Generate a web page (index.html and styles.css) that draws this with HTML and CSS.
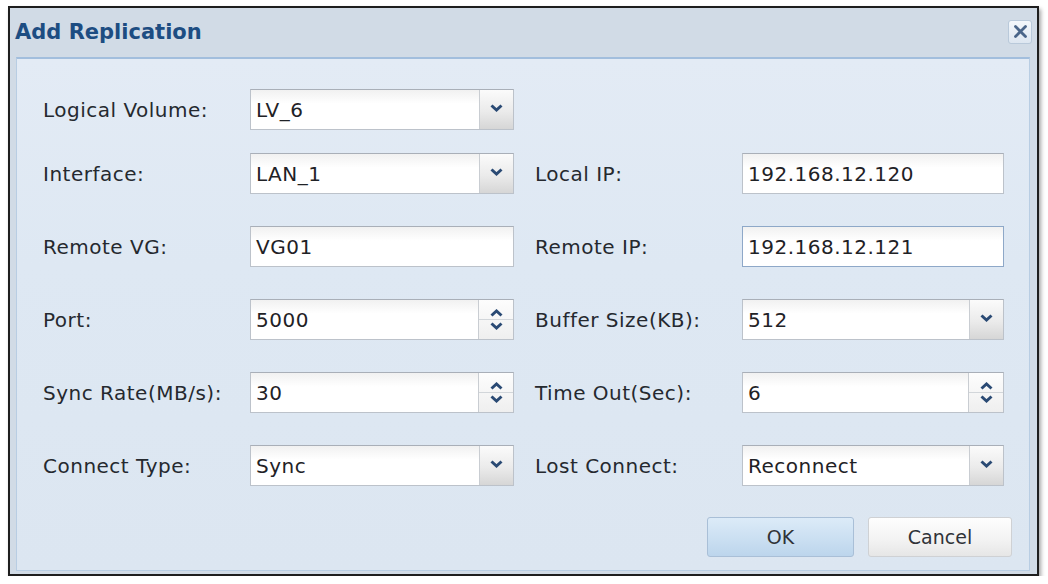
FILE: index.html
```html
<!DOCTYPE html>
<html lang="en">
	<head>
		<meta charset="UTF-8">
		<title>Add Replication</title>
		<link rel="stylesheet" href="styles.css">
	</head>
    <body>
        <div class="dialog">
            <div class="titlebar">
                <span class="title">Add Replication</span>
                <button type="button" class="close">
                    <svg width="15" height="15" viewBox="0 0 15 15"><path d="M2.5 2.5L12.5 12.5M12.5 2.5L2.5 12.5" stroke="#4a6589" stroke-width="2.8" stroke-linecap="round"/></svg>
                </button>
            </div>
            <div class="panel">
                <div class="grid">
                    <label class="lbl">Logical Volume:</label>
                    <div class="box"><span class="val">LV_6</span><span class="drop"><svg width="13" height="8" viewBox="0 0 13 8"><path d="M1.5 1.5L6.5 6L11.5 1.5" fill="none" stroke="#2a4a74" stroke-width="3"/></svg></span></div>
                    <span></span><span></span>

                    <label class="lbl">Interface:</label>
                    <div class="box"><span class="val">LAN_1</span><span class="drop"><svg width="13" height="8" viewBox="0 0 13 8"><path d="M1.5 1.5L6.5 6L11.5 1.5" fill="none" stroke="#2a4a74" stroke-width="3"/></svg></span></div>
                    <label class="lbl right">Local IP:</label>
                    <div class="box"><span class="val">192.168.12.120</span></div>

                    <label class="lbl">Remote VG:</label>
                    <div class="box"><span class="val">VG01</span></div>
                    <label class="lbl right">Remote IP:</label>
                    <div class="box focus"><span class="val">192.168.12.121</span></div>

                    <label class="lbl">Port:</label>
                    <div class="box"><span class="val">5000</span><span class="spin"><i class="up"><svg width="13" height="8" viewBox="0 0 13 8"><path d="M1.5 6.5L6.5 2L11.5 6.5" fill="none" stroke="#2a4a74" stroke-width="3"/></svg></i><i class="down"><svg width="13" height="8" viewBox="0 0 13 8"><path d="M1.5 1.5L6.5 6L11.5 1.5" fill="none" stroke="#2a4a74" stroke-width="3"/></svg></i></span></div>
                    <label class="lbl right">Buffer Size(KB):</label>
                    <div class="box"><span class="val">512</span><span class="drop"><svg width="13" height="8" viewBox="0 0 13 8"><path d="M1.5 1.5L6.5 6L11.5 1.5" fill="none" stroke="#2a4a74" stroke-width="3"/></svg></span></div>

                    <label class="lbl">Sync Rate(MB/s):</label>
                    <div class="box"><span class="val">30</span><span class="spin"><i class="up"><svg width="13" height="8" viewBox="0 0 13 8"><path d="M1.5 6.5L6.5 2L11.5 6.5" fill="none" stroke="#2a4a74" stroke-width="3"/></svg></i><i class="down"><svg width="13" height="8" viewBox="0 0 13 8"><path d="M1.5 1.5L6.5 6L11.5 1.5" fill="none" stroke="#2a4a74" stroke-width="3"/></svg></i></span></div>
                    <label class="lbl right">Time Out(Sec):</label>
                    <div class="box"><span class="val">6</span><span class="spin"><i class="up"><svg width="13" height="8" viewBox="0 0 13 8"><path d="M1.5 6.5L6.5 2L11.5 6.5" fill="none" stroke="#2a4a74" stroke-width="3"/></svg></i><i class="down"><svg width="13" height="8" viewBox="0 0 13 8"><path d="M1.5 1.5L6.5 6L11.5 1.5" fill="none" stroke="#2a4a74" stroke-width="3"/></svg></i></span></div>

                    <label class="lbl">Connect Type:</label>
                    <div class="box"><span class="val">Sync</span><span class="drop"><svg width="13" height="8" viewBox="0 0 13 8"><path d="M1.5 1.5L6.5 6L11.5 1.5" fill="none" stroke="#2a4a74" stroke-width="3"/></svg></span></div>
                    <label class="lbl right">Lost Connect:</label>
                    <div class="box"><span class="val">Reconnect</span><span class="drop"><svg width="13" height="8" viewBox="0 0 13 8"><path d="M1.5 1.5L6.5 6L11.5 1.5" fill="none" stroke="#2a4a74" stroke-width="3"/></svg></span></div>
                </div>
                <div class="buttons">
                    <button type="button" class="btn ok">OK</button>
                    <button type="button" class="btn cancel">Cancel</button>
                </div>
            </div>
        </div>
    </body>
</html>
```

FILE: styles.css
```css
body{padding:0; margin:0; background:#fff; font-family:"DejaVu Sans", Verdana, sans-serif;}

.dialog{
    width:1031px; height:570px; margin:6px 0 0 8px; box-sizing:border-box;
    border:2px solid #1e1e1e; background:#d1dbe6;
    padding:0 7px 3px 6px;
    display:flex; flex-direction:column;
    box-shadow:2px 3px 4px rgba(0,0,0,.35);
}
.titlebar{
    height:49px; flex:none;
    display:flex; align-items:center; justify-content:space-between;
}
.title{font-size:21px; font-weight:bold; color:#1d4d82; margin-left:-1px; margin-top:-1px;}
.close{
    width:24px; height:24px; margin-right:-2px; margin-top:-2px; padding:0;
    border:1px solid #b9c9da; border-radius:3px;
    background:linear-gradient(#f3f7fb, #dde6f0);
    display:flex; align-items:center; justify-content:center;
}

.panel{
    flex:1; display:flex; flex-direction:column;
    border:1px solid #b8cde3; border-top:2px solid #a2bedd;
    background:linear-gradient(#e3ebf5, #dee8f3 40%, #dce6f1);
    padding:30px 0 0 26px;
}
.grid{
    display:grid;
    grid-template-columns:207px 264px 228px 262px;
    grid-template-rows:64px repeat(4, 73px) 41px;
    align-items:start;
}
.lbl{
    height:41px; display:flex; align-items:center;
    font-size:20px; letter-spacing:.5px; color:#25292f;
}
.lbl.right{padding-left:21px;}

.box{
    height:41px; box-sizing:border-box;
    border:1px solid #bcc2ca; border-top-color:#a9afb8;
    background:linear-gradient(#f1f1f1, #fff 35%);
    display:flex; align-items:stretch;
}
.box.focus{border-color:#8ea8c8;}
.val{
    flex:1; display:flex; align-items:center; padding-left:5px;
    font-size:20px; letter-spacing:.5px; color:#1f2226;
}
.drop{
    width:34px; flex:none; border-left:1px solid #c9cdd2;
    background:linear-gradient(#fbfbfb, #ebebeb 55%, #d6d6d6);
    display:flex; align-items:center; justify-content:center;
    padding-bottom:3px; box-sizing:border-box;
}
.spin{
    width:34px; flex:none; border-left:1px solid #c9cdd2;
    display:flex; flex-direction:column;
    background:linear-gradient(#fdfdfd, #efefef);
}
.spin i{flex:1; display:flex; justify-content:center;}
.spin .up{border-bottom:1px solid #d2d6da; align-items:flex-end; padding-bottom:2px;}
.spin .down{align-items:flex-start; padding-top:2px;}

.buttons{
    display:flex; justify-content:flex-end; gap:14px;
    margin-top:31px; padding-right:17px;
}
.btn{
    height:40px; border-radius:3px; padding:0;
    font-family:"DejaVu Sans", Verdana, sans-serif; font-size:19px; color:#303338;
}
.ok{
    width:147px; border:1px solid #a9bfd7;
    background:linear-gradient(#dcebf8, #c9def1 60%, #bcd5ec);
}
.cancel{
    width:144px; border:1px solid #cfd1d4;
    background:linear-gradient(#fefefe, #f2f2f2 60%, #e6e6e6);
}
```
